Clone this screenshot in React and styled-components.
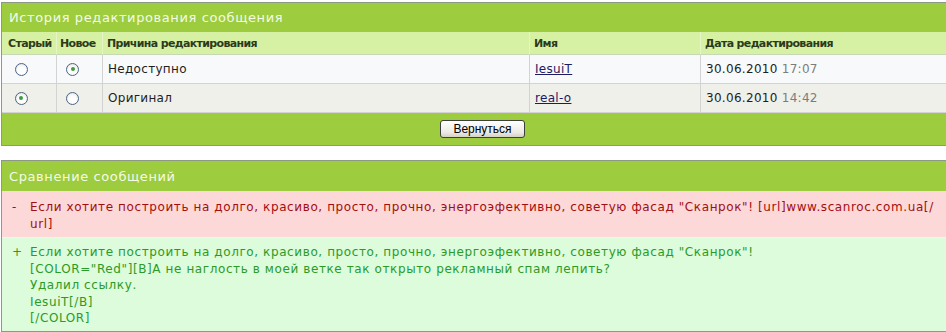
import React from 'react'
import styled, { createGlobalStyle } from 'styled-components'

const GlobalStyle = createGlobalStyle`
body{
    margin:0;
    background:#ffffff;
    overflow:hidden;
    font-family:"DejaVu Sans", Verdana, sans-serif;
}
`

const Page = styled.div`
padding:2px 0 0 1px;
display:flex;
flex-direction:column;
gap:14px;
`

const Panel = styled.div`
width:961px;
border:1px solid #8c9985;
border-right:none;
background:#ffffff;
`

const Title = styled.div`
background:#9dcc3e;
color:#f4fbe6;
height:${p => p.h}px;
display:flex;
align-items:center;
padding-left:7px;
font-size:13px;
letter-spacing:0.6px;
`

const Grid = styled.div`
display:grid;
grid-template-columns:54px 46px 427px 171px 1fr;
`

const HeadCell = styled.div`
background:#d6f1a3;
color:#2c3a1c;
font-size:11px;
font-weight:bold;
letter-spacing:-0.65px;
height:22px;
display:flex;
align-items:center;
padding-left:${p => p.pl || 4}px;
border-left:${p => (p.first ? 'none' : '1px solid #e6f5c8')};
border-bottom:1px solid #c6d8b8;
`

const Cell = styled.div`
background:${p => (p.alt ? '#f0f0ea' : '#f8f9fb')};
height:28px;
display:flex;
align-items:center;
justify-content:${p => (p.center ? 'center' : 'flex-start')};
padding-left:${p => (p.center ? 0 : 5)}px;
font-size:12px;
letter-spacing:0.3px;
color:#1e1e1e;
border-left:${p => (p.first ? 'none' : '1px solid #d3d3d3')};
border-bottom:1px solid #d3d3d3;
`

const Radio = styled.span`
width:11px;
height:11px;
border-radius:50%;
border:1px solid #4c6489;
background:radial-gradient(circle at 50% 60%, #ffffff 40%, #dcdcd6 100%);
display:flex;
align-items:center;
justify-content:center;
margin-left:${p => p.shift || 0}px;
&::after{
    content:'';
    width:4px;
    height:4px;
    border-radius:50%;
    background:${p => (p.checked ? '#3f9b3f' : 'transparent')};
}
`

const UserLink = styled.a`
color:#1b1b66;
text-decoration:underline;
`

const Time = styled.span`
color:#7c7c7c;
margin-left:4px;
`

const Footer = styled.div`
background:#9dcc3e;
height:32px;
display:flex;
align-items:center;
justify-content:center;
`

const Button = styled.button`
font-family:"Liberation Sans", Arial, sans-serif;
font-size:12px;
color:#000;
height:18px;
padding:0 12px;
border:1px solid #3f3f3f;
border-radius:3px;
background:linear-gradient(#ffffff, #ecebe6 70%, #d6d0c5);
line-height:14px;
`

const DiffRow = styled.div`
display:grid;
grid-template-columns:18px 1fr;
padding:${p => p.pad};
padding-left:10px;
background:${p => (p.kind === 'del' ? '#fdd8d9' : '#dcfcdc')};
color:${p => (p.kind === 'del' ? '#a20f0f' : '#2c9a26')};
font-size:12px;
letter-spacing:0.6px;
line-height:${p => p.lh}px;
border-bottom:${p => (p.kind === 'del' ? '1px solid #f3f3f3' : 'none')};
`

const rows = [
    { oldChecked: false, newChecked: true, reason: 'Недоступно', user: 'IesuiT', date: '30.06.2010', time: '17:07' },
    { oldChecked: true, newChecked: false, reason: 'Оригинал', user: 'real-o', date: '30.06.2010', time: '14:42' },
]

export default function App() {
    return (
        <>
            <GlobalStyle />
            <Page>
                <Panel>
                    <Title h={29}>История редактирования сообщения</Title>
                    <Grid>
                        <HeadCell first pl={6}>Старый</HeadCell>
                        <HeadCell pl={3}>Новое</HeadCell>
                        <HeadCell>Причина редактирования</HeadCell>
                        <HeadCell>Имя</HeadCell>
                        <HeadCell>Дата редактирования</HeadCell>
                        {rows.map((r, i) => (
                            <React.Fragment key={i}>
                                <Cell first center alt={i === 1}><Radio checked={r.oldChecked} shift={-16} /></Cell>
                                <Cell center alt={i === 1}><Radio checked={r.newChecked} shift={-14} /></Cell>
                                <Cell alt={i === 1}>{r.reason}</Cell>
                                <Cell alt={i === 1}><UserLink href="#">{r.user}</UserLink></Cell>
                                <Cell alt={i === 1}>{r.date}<Time>{r.time}</Time></Cell>
                            </React.Fragment>
                        ))}
                    </Grid>
                    <Footer><Button>Вернуться</Button></Footer>
                </Panel>
                <Panel>
                    <Title h={30}>Сравнение сообщений</Title>
                    <DiffRow kind="del" pad="8px 0 4px" lh={17}>
                        <span>-</span>
                        <span>Если хотите построить на долго, красиво, просто, прочно, энергоэфективно, советую фасад "Сканрок"! [url]www.scanroc.com.ua[/<br />url]</span>
                    </DiffRow>
                    <DiffRow kind="add" pad="6px 0 4px" lh={16.5}>
                        <span>+</span>
                        <span>
                            Если хотите построить на долго, красиво, просто, прочно, энергоэфективно, советую фасад "Сканрок"!<br />
                            [COLOR="Red"][B]А не наглость в моей ветке так открыто рекламный спам лепить?<br />
                            Удалил ссылку.<br />
                            IesuiT[/B]<br />
                            [/COLOR]
                        </span>
                    </DiffRow>
                </Panel>
            </Page>
        </>
    )
}
